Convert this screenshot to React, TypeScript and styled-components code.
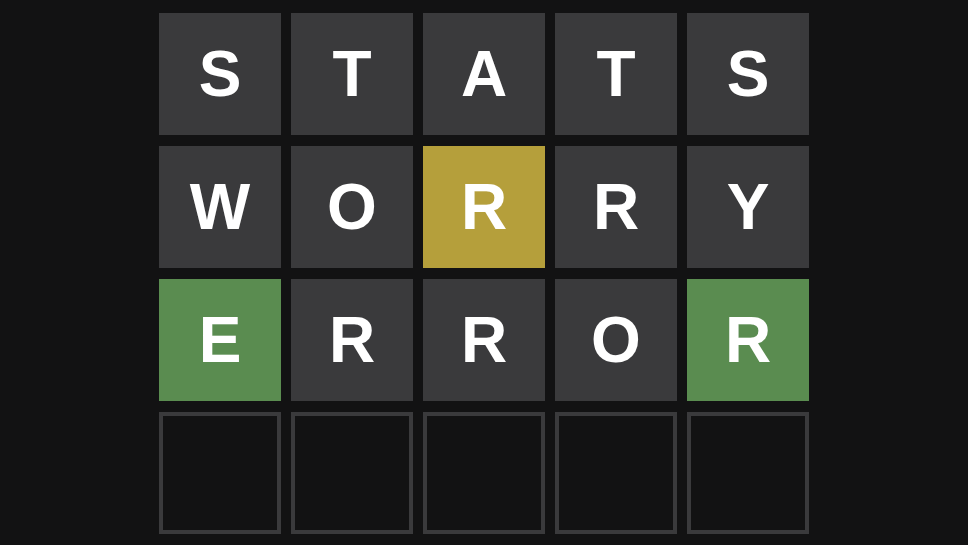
import React from 'react'
import styled, { createGlobalStyle } from 'styled-components'

type State = 'absent' | 'present' | 'correct' | 'empty'

const GlobalStyle = createGlobalStyle`
  html, body {
    margin: 0;
    padding: 0;
    background: #121213;
  }
`

const Page = styled.div`
  width: 968px;
  height: 545px;
  background: #121213;
  display: flex;
  justify-content: center;
  padding-top: 13px;
  box-sizing: border-box;
  overflow: hidden;
`

const Board = styled.div`
  display: grid;
  grid-template-columns: repeat(5, 122px);
  grid-auto-rows: 122px;
  column-gap: 10px;
  row-gap: 11px;
`

const colours: Record<State, string> = {
  absent: '#3a3a3c',
  present: '#b59f3b',
  correct: '#5a8c50',
  empty: 'transparent',
}

const Tile = styled.div<{ $state: State }>`
  box-sizing: border-box;
  display: flex;
  align-items: center;
  justify-content: center;
  background: ${({ $state }) => colours[$state]};
  border: ${({ $state }) => ($state === 'empty' ? '4px solid #3a3a3c' : 'none')};
  color: #ffffff;
  font-family: 'Liberation Sans', Arial, sans-serif;
  font-weight: 700;
  font-size: 64px;
  line-height: 1;
  text-transform: uppercase;
`

const rows: { word: string; states: State[] }[] = [
  { word: 'STATS', states: ['absent', 'absent', 'absent', 'absent', 'absent'] },
  { word: 'WORRY', states: ['absent', 'absent', 'present', 'absent', 'absent'] },
  { word: 'ERROR', states: ['correct', 'absent', 'absent', 'absent', 'correct'] },
  { word: '     ', states: ['empty', 'empty', 'empty', 'empty', 'empty'] },
]

const App = () => {
  return (
    <>
      <GlobalStyle />
      <Page>
        <Board>
          {rows.map((row, r) =>
            row.states.map((s, c) => (
              <Tile key={`${r}-${c}`} $state={s}>
                {row.word[c].trim()}
              </Tile>
            ))
          )}
        </Board>
      </Page>
    </>
  )
}

export default App
